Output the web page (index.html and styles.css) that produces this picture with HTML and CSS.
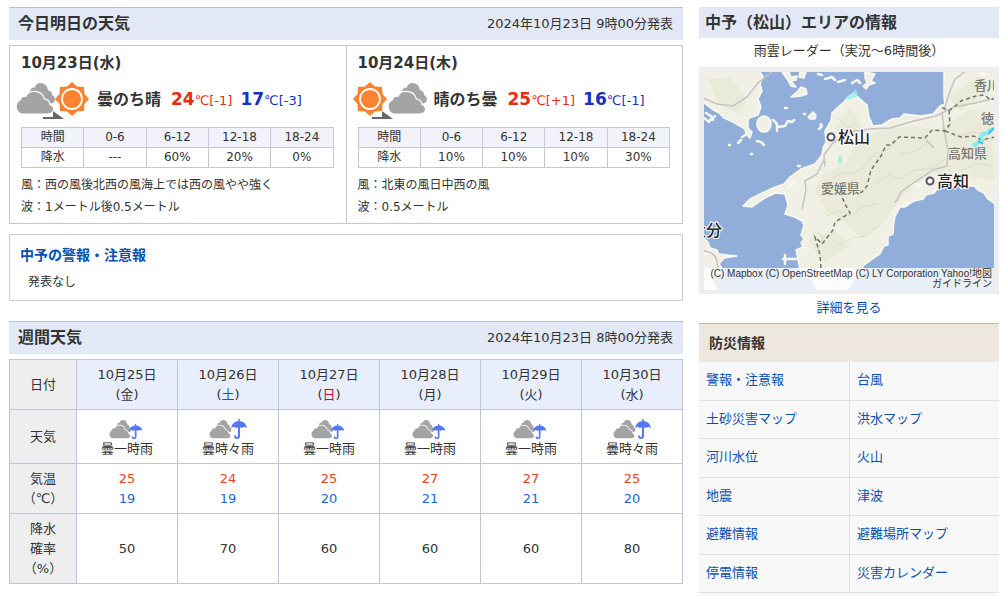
FILE: index.html
```html
<!DOCTYPE html>
<html lang="ja">
<head>
<meta charset="utf-8">
<meta name="viewport" content="width=device-width, initial-scale=1">
<title>中予（松山）の天気</title>
<link rel="stylesheet" href="styles.css">
</head>
<body>
<svg class="defs" aria-hidden="true">
  <defs>
    <path id="cloud-shape" d="M7 21.500A7 7 0 0 1 5.500 8.500Q7 3.500 11.500 5Q13 0 19 0Q27 0 29 7.500Q34 8 34.500 13Q38 14 38 17.500Q37.500 21.500 31.500 21.500Z"/>
    <g id="cloud">
      <use href="#cloud-shape" transform="translate(10 0) scale(.76 .95)" fill="#a4a4a4"/>
      <use href="#cloud-shape" transform="translate(-1 9)" fill="#a4a4a4" stroke="#fff" stroke-width="2.500" paint-order="stroke"/>
    </g>
    <g id="sun">
      <path d="M0-17L5-12.500 12-12 12.500-5 17 0 12.500 5 12 12 5 12.500 0 17-5 12.500-12 12-12.500 5-17 0-12.500-5-12-12-5-12.500Z" fill="#f98330"/>
      <circle r="10" fill="#f98330" stroke="#fff" stroke-width="1.800"/>
    </g>
    <path id="arrow" d="M0 8V6H10V0L21 8Z" fill="#666"/>
    <g id="umbrella" fill="none" stroke="#5577f7">
      <path d="M0 9Q1 3 7.300 2V0H8.700V2Q15 3 16 9L13.300 7.800 10.700 9 8 7.800 5.300 9 2.700 7.800Z" fill="#5577f7" stroke="none"/>
      <path d="M8 7V17Q8 19 6 19T4 16.500" stroke-width="2"/>
    </g>
    <g id="brief-rain">
      <use href="#cloud" transform="translate(1 1) scale(.57 .6)"/>
      <use href="#umbrella" transform="translate(21 5) scale(.83 .76)"/>
    </g>
    <g id="periodic-rain">
      <use href="#cloud" transform="translate(0 1) scale(.58 .6)"/>
      <use href="#umbrella" transform="translate(22 0)"/>
    </g>
  </defs>
</svg>
<div class="page">
  <main class="main">
    <header class="head">
      <h2 class="head-title">今日明日の天気</h2>
      <p class="head-time">2024年10月23日 9時00分発表</p>
    </header>
    <div class="days">
      <section class="day">
        <h3 class="day-date">10月23日(水)</h3>
        <div class="day-summary">
          <svg class="day-icon" viewBox="0 0 76 40" aria-hidden="true"><use href="#cloud" x="1" y="3"/><use href="#arrow" x="28" y="31"/><use href="#sun" x="57" y="19"/></svg>
          <b class="day-weather">曇のち晴</b>
          <span class="temp high"><b>24</b>℃[-1]</span>
          <span class="temp low"><b>17</b>℃[-3]</span>
        </div>
        <table class="rain">
          <tr><th scope="row">時間</th><th>0-6</th><th>6-12</th><th>12-18</th><th>18-24</th></tr>
          <tr><td>降水</td><td>---</td><td>60%</td><td>20%</td><td>0%</td></tr>
        </table>
        <p class="note">風：西の風後北西の風海上では西の風やや強く</p>
        <p class="note">波：1メートル後0.5メートル</p>
      </section>
      <section class="day">
        <h3 class="day-date">10月24日(木)</h3>
        <div class="day-summary">
          <svg class="day-icon" viewBox="0 0 76 40" aria-hidden="true"><use href="#cloud" x="36" y="3"/><use href="#arrow" x="20" y="31"/><use href="#sun" x="18" y="19"/></svg>
          <b class="day-weather">晴のち曇</b>
          <span class="temp high"><b>25</b>℃[+1]</span>
          <span class="temp low"><b>16</b>℃[-1]</span>
        </div>
        <table class="rain">
          <tr><th scope="row">時間</th><th>0-6</th><th>6-12</th><th>12-18</th><th>18-24</th></tr>
          <tr><td>降水</td><td>10%</td><td>10%</td><td>10%</td><td>30%</td></tr>
        </table>
        <p class="note">風：北東の風日中西の風</p>
        <p class="note">波：0.5メートル</p>
      </section>
    </div>
    <section class="alerts">
      <h3 class="alerts-title"><a href="#">中予の警報・注意報</a></h3>
      <p class="alerts-text">発表なし</p>
    </section>
    <header class="head">
      <h2 class="head-title">週間天気</h2>
      <p class="head-time">2024年10月23日 8時00分発表</p>
    </header>
    <table class="week">
      <colgroup><col class="week-label"></colgroup>
      <tr class="row-date"><th>日付</th><td>10月25日<br>(金)</td><td>10月26日<br>(<span class="sat">土</span>)</td><td>10月27日<br>(<span class="sun">日</span>)</td><td>10月28日<br>(月)</td><td>10月29日<br>(火)</td><td>10月30日<br>(水)</td></tr>
      <tr class="row-weather"><th>天気</th>
        <td><svg class="week-icon" viewBox="0 0 38 20" aria-hidden="true"><use href="#brief-rain"/></svg>曇一時雨</td>
        <td><svg class="week-icon" viewBox="0 0 38 20" aria-hidden="true"><use href="#periodic-rain"/></svg>曇時々雨</td>
        <td><svg class="week-icon" viewBox="0 0 38 20" aria-hidden="true"><use href="#brief-rain"/></svg>曇一時雨</td>
        <td><svg class="week-icon" viewBox="0 0 38 20" aria-hidden="true"><use href="#brief-rain"/></svg>曇一時雨</td>
        <td><svg class="week-icon" viewBox="0 0 38 20" aria-hidden="true"><use href="#brief-rain"/></svg>曇一時雨</td>
        <td><svg class="week-icon" viewBox="0 0 38 20" aria-hidden="true"><use href="#periodic-rain"/></svg>曇時々雨</td></tr>
      <tr class="row-temp"><th>気温<br>（℃）</th>
        <td><span class="max">25</span><br><span class="min">19</span></td>
        <td><span class="max">24</span><br><span class="min">19</span></td>
        <td><span class="max">25</span><br><span class="min">20</span></td>
        <td><span class="max">27</span><br><span class="min">21</span></td>
        <td><span class="max">27</span><br><span class="min">21</span></td>
        <td><span class="max">25</span><br><span class="min">20</span></td></tr>
      <tr class="row-rain"><th>降水<br>確率<br>（%）</th><td>50</td><td>70</td><td>60</td><td>60</td><td>60</td><td>80</td></tr>
    </table>
  </main>
  <aside class="side">
    <h2 class="side-title">中予（松山）エリアの情報</h2>
    <p class="radar-label">雨雲レーダー（実況～6時間後）</p>
    <div class="radar">
      <svg class="map" viewBox="704 72 290 218" role="img" aria-label="雨雲レーダーの地図">
        <rect x="704" y="72" width="290" height="218" fill="#90aed9"/>
        <g fill="#f1f0e4" stroke="#faf9f2" stroke-width="1.500" stroke-linejoin="round">
          <path d="M703 71H759L763 76 760 84 762 91 758 99 761 107 758 115 749 118 748 121 748 128 752 132 750 138 746 134 745 129 740 126 733 122 724 118 719 113 712 109 703 102Z"/>
          <ellipse cx="764" cy="124" rx="7" ry="8"/>
          <path d="M782 72L789 72 791 77 797 76 796 80 791 81 796 87 791 86 787 79ZM798 91L801 87 806 89 807 94 801 96 791 97ZM800 72H806L804 78 799 77ZM808 117L813 112 816 115 815 119 810 119ZM865 72L875 74 871 81 875 83 869 85 866 89 863 86 867 83 865 78Z"/>
          <path d="M703 238L708 242 710 248 717 250 719 254 727 255 737 256 724 258 719 264 723 270 712 280 718 291H703Z"/>
          <path d="M944 71H995V204L988 199 984 193 978 190 974 186 968 186 963 183 956 186 948 184 944 188 937 189 934 193 926 195 923 199 914 201 905 207 900 207 897 213 895 216 894 222 893 234 888 236 888 245 884 246 880 254 871 260 863 266 863 270 855 278 849 287 842 291H817L813 280 801 276 798 259 796 250 803 247 801 243 804 239 801 235 804 225 802 221 795 217 785 214 788 205 785 194 775 193 765 198 752 207 743 206 750 199 760 194 773 188 784 184 790 177 801 169 815 164 822 155 823 148 826 142 825 131 831 121 832 113 838 107 844 102 848 97 854 93 859 98 867 105 869 117 873 126 882 125 892 119 900 118 904 114 921 116 933 114 940 106 945 104 944 97Z"/>
        </g>
        <g fill="#e1e4cc" opacity=".45">
          <path d="M880 130L914 126 938 130 970 108 991 115 994 180 962 176 931 173 902 196 881 226 862 239 846 223 827 212 815 190 824 173 846 163 856 144Z"/>
          <path d="M835 128L850 107 862 126 844 142ZM707 79L731 77 746 99 742 115 721 106ZM809 240L835 230 850 247 822 263ZM949 96L979 76 991 91 960 111Z"/>
        </g>
        <g stroke="#cfd2bd" fill="none" opacity=".6">
          <path d="M832 178l12-6 9 2 12-8 8-11 15-6 10-10M875 183l13-8 12 4 15-9 20-2 13-12M826 216l14-5 11 5 12-9 14-4M836 246l17-8 13-2 13-11M900 155l18-5 9-7M962 170l16-7 14 3M838 118l9 10 9-4M956 137l18-5 12 3M815 230l8 7-5 13"/>
        </g>
        <path d="M825 79l7-2 3 3M838 82l7-2M852 83l5-3 3 3M818 74l4 1M785 108h2M804 114h1M706 113l5 3 2 4M704 118l5 4M710 120l5-4M709 121l4-2M773 120l4 4v7M777 127l8-1 3-5 4 1 2-2M819 129l3-3M821 124v2M757 141l4 1 3 3M729 145h1M738 143l3-3M742 137l5-3M751 154h1M798 166h2M911 186l5-2 4 1 5-4M902 206l6-4M795 180l-6 8M705 254l5-3M783 259h13M785 255v9M980 73l6 1" fill="none" stroke="#f7f7f2" stroke-width="2.500" stroke-linecap="round" stroke-linejoin="round"/>
        <g fill="none" stroke="#c8c1c2" stroke-width="1.500">
          <path d="M703 98L717 104 733 106 747 97 758 83 773 71M869 129L890 128 914 121 936 116 954 107 975 103 995 98M825 167L824 155 832 144 850 132 869 129M802 209L806 190 805 181 817 174 824 160M944 110L949 94 955 79 966 71M942 112L944 130 948 150 947 166 933 170 918 180 902 191 895 203M703 251Q721 252 717 274M926 140L934 148"/>
        </g>
        <path d="M821 268L820 255 815 237 822 244 833 230 835 222 850 213 845 204 841 195M846 194L862 192 867 186 871 170 881 156 886 145 891 145 899 137 925 138 932 130 945 131 950 124 949 111 941 107M949 111L961 101 976 96 984 95 991 100 995 98M945 131L961 137 974 136 981 140 995 137" fill="none" stroke="#74746a" stroke-width="1.500" stroke-dasharray="4 3"/>
        <path d="M847 98l4-1 4-4 1 4" fill="none" stroke="#8defef" stroke-width="4" opacity=".8"/>
        <ellipse cx="840" cy="160" rx="2" ry="4" fill="#8defdf" opacity=".8"/>
        <path d="M973 146l6-4 5-2M980 138l3-4 4-1M988 132l7-4" fill="none" stroke="#77eaf2" stroke-width="4" opacity=".85"/>
        <path d="M978 141l5 3M988 134l6-6" stroke="#39bff1" stroke-width="2"/>
        <g fill="#fff" stroke="#555566" stroke-width="2"><circle cx="831" cy="137" r="3.500"/><circle cx="930" cy="181" r="3.500"/></g>
        <g class="map-city"><text x="838" y="143">松山</text><text x="937" y="187">高知</text><text x="690" y="236">大分</text></g>
        <g class="map-pref"><text x="821" y="193">愛媛県</text><text x="948" y="158">高知県</text><text x="974" y="90">香川県</text><text x="981" y="123">徳島県</text></g>
      </svg>
      <p class="map-credit">(C) Mapbox (C) OpenStreetMap (C) LY Corporation Yahoo!地図<br>ガイドライン</p>
    </div>
    <p class="more"><a href="#">詳細を見る</a></p>
    <h3 class="disaster-title">防災情報</h3>
    <nav class="disaster">
      <ul class="links">
        <li><a href="#">警報・注意報</a></li>
        <li><a href="#">土砂災害マップ</a></li>
        <li><a href="#">河川水位</a></li>
        <li><a href="#">地震</a></li>
        <li><a href="#">避難情報</a></li>
        <li><a href="#">停電情報</a></li>
      </ul>
      <ul class="links">
        <li><a href="#">台風</a></li>
        <li><a href="#">洪水マップ</a></li>
        <li><a href="#">火山</a></li>
        <li><a href="#">津波</a></li>
        <li><a href="#">避難場所マップ</a></li>
        <li><a href="#">災害カレンダー</a></li>
      </ul>
    </nav>
  </aside>
</div>
</body>
</html>
```
FILE: styles.css
```css
* { box-sizing: border-box; }
body, h2, h3, p, ul { margin: 0; padding: 0; }
body {
  background: #fff;
  color: #333;
  font: 13px/20px "DejaVu Sans", "Noto Sans CJK JP", sans-serif;
}
a { color: #0a4fb0; text-decoration: none; }
a:hover { text-decoration: underline; }
ul { list-style: none; }
table { border-collapse: collapse; table-layout: fixed; }
th { font-weight: normal; }
.defs { display: none; }

.page {
  display: grid;
  grid-template-columns: minmax(0, 1fr) 300px;
  gap: 16px;
  padding: 7px 5px 0 9px;
}

.head {
  display: flex;
  justify-content: space-between;
  align-items: center;
  min-height: 33px;
  padding: 0 10px 0 9px;
  border-top: 1px solid #b5c4dc;
  background: #e2e8f5;
}
.head-title { font-size: 16px; line-height: 24px; }

.days {
  display: flex;
  margin: 5px 0 10px;
  border: 1px solid #c2c7de;
}
.day { flex: 1; padding: 6px 12px 5px 11px; }
.day + .day { border-left: 1px solid #c2c7de; }
.day-date { font-size: 15px; line-height: 22px; }
.day-summary {
  display: flex;
  align-items: center;
  height: 53px;
  padding-bottom: 2px;
  margin-left: -6px;
  white-space: nowrap;
}
.day-icon { width: 76px; height: 40px; flex: none; }
.day-weather { margin: 0 10px 0 6px; font-size: 16px; }
.temp { margin-right: 8px; }
.temp b { font-size: 17px; }
.high { color: #e82c12; }
.low { color: #1731bd; }

.rain { width: 100%; margin-bottom: 6px; font-size: 12px; text-align: center; }
.rain th, .rain td { height: 20px; padding: 0; border: 1px solid #c2c7de; line-height: 19px; }
.rain th { background: #f1f2fa; }
.note { font-size: 12px; line-height: 22px; }

.alerts {
  margin-bottom: 20px;
  padding: 9px 10px 3px;
  border: 1px solid #cacaca;
  border-radius: 2px;
}
.alerts-title { font-size: 14px; line-height: 22px; }
.alerts-text { padding: 6px 8px 5px; font-size: 12px; }

.week { width: 100%; margin-top: 5px; text-align: center; }
.week th, .week td { padding: 0; border: 1px solid #bfc5dd; }
.week th { background: #eee; }
.week-label { width: 67px; }
.row-date { height: 50px; }
.row-date td { background: #e8eefc; }
.row-weather { height: 54px; }
.row-temp { height: 50px; }
.row-rain { height: 70px; }
.week-icon { display: block; width: 38px; height: 20px; margin: 4px auto 0; }
.sat { color: #1852d8; }
.sun { color: #c20a35; }
.max { color: #e5431f; }
.min { color: #1769cf; }

.side-title {
  padding: 0 6px;
  background: #e2e8f5;
  font-size: 16px;
  line-height: 31px;
}
.radar-label { padding: 3px 0 6px; text-align: center; }
.radar { position: relative; padding: 5px 5px 4px; background: #eee; }
.map { display: block; width: 100%; }
.map-city { font: 500 16px "Noto Sans CJK JP", sans-serif; fill: #222; stroke: #fff; stroke-width: 2px; paint-order: stroke; }
.map-pref { font: 500 13px "Noto Sans CJK JP", sans-serif; fill: #77776e; stroke: #eff0e1; stroke-width: 1px; paint-order: stroke; }
.map-credit {
  position: absolute;
  right: 5px;
  bottom: 4px;
  left: 5px;
  padding: 1px 2px;
  background: rgba(255, 255, 255, 0.8);
  font: 10px/10px "Liberation Sans", "Noto Sans CJK JP", sans-serif;
  text-align: right;
}
.more { padding: 4px 0 5px; text-align: center; }

.disaster-title {
  padding: 0 10px;
  border-top: 1px solid #c5b5a1;
  background: #eee7df;
  font-size: 14px;
  line-height: 38px;
}
.disaster { display: grid; grid-template-columns: 1fr 1fr; padding-bottom: 3px; background: #f8f8f8; }
.links { display: grid; grid-auto-rows: 1fr; min-height: 231px; }
.links + .links { border-left: 1px solid #e0e0e0; }
.links li { padding: 8px 7px; border-bottom: 1px solid #e0e0e0; }
```
